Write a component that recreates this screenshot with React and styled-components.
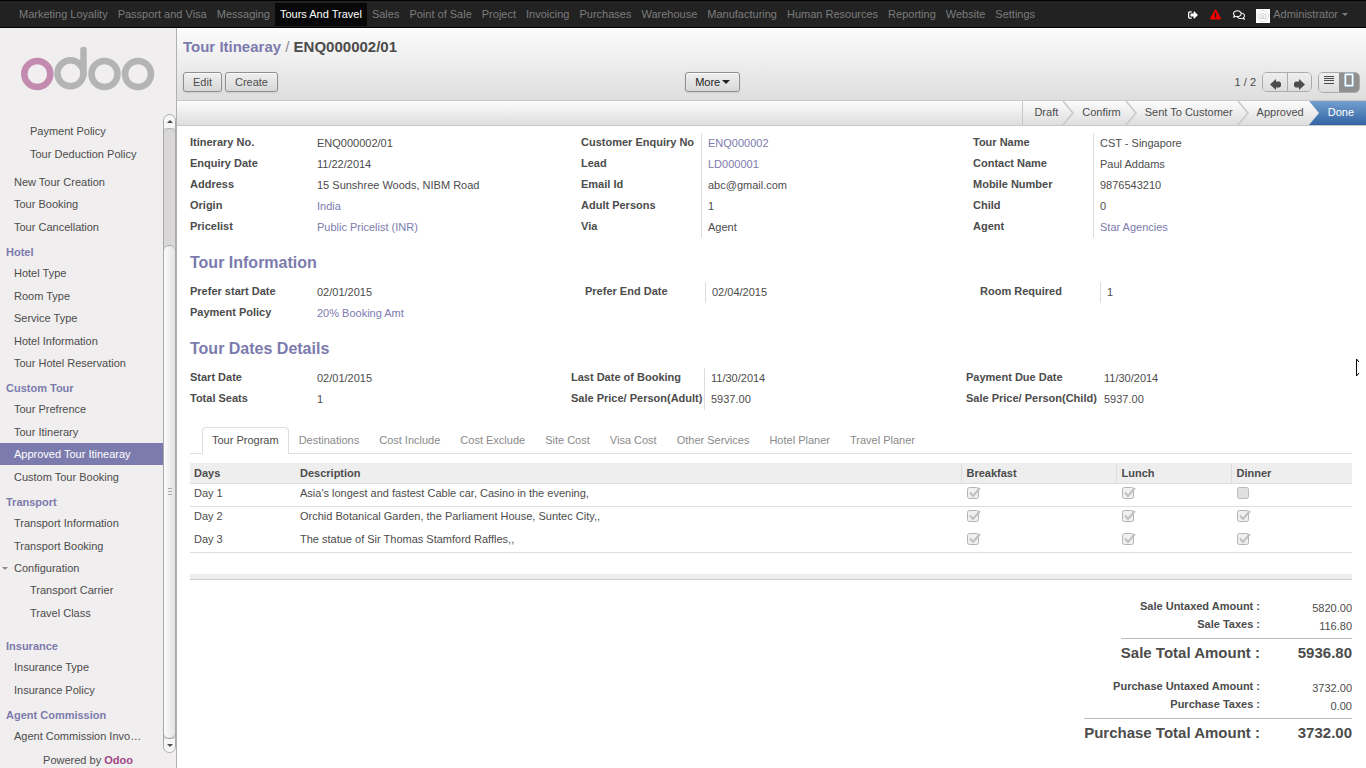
import React from 'react';
import styled, { createGlobalStyle } from 'styled-components';
import { FaSignOutAlt, FaExclamationTriangle, FaRegComments } from 'react-icons/fa';

const GlobalStyle = createGlobalStyle`
  * {
    box-sizing: border-box;
  }

  body {
    margin: 0;
    background: white;
    color: #4c4c4c;
    font-family: "Liberation Sans", Arial, sans-serif;
    font-size: 11px;
    line-height: 21px;
  }

  a {
    color: inherit;
    text-decoration: none;
  }

  ul {
    margin: 0;
    padding: 0;
    list-style: none;
  }

  button {
    font: inherit;
    color: inherit;
  }
`;

const Page = styled.div`
  display: flex;
  flex-direction: column;
  height: 100vh;
  overflow: hidden;
`;

const TopBar = styled.header`
  display: flex;
  justify-content: space-between;
  flex: none;
  height: 28px;
  padding: 2px 18px 1px 14px;
  background: #222;
  border-top: 1px solid #000;
  border-bottom: 1px solid #000;
  color: #7c7c7c;
`;

const NavMenu = styled.nav`
  display: flex;
`;

const NavLink = styled.a`
  padding: 0 5px;
  line-height: 22px;
  white-space: nowrap;
  background: ${props => props.$active ? '#080808' : 'transparent'};
  color: ${props => props.$active ? '#fff' : 'inherit'};
`;

const UserMenu = styled.div`
  display: flex;
  align-items: center;
`;

const IconButton = styled.button`
  display: flex;
  justify-content: center;
  width: 23px;
  padding: 0;
  border: 0;
  background: none;
  color: ${props => props.$color || '#fff'};
`;

const Avatar = styled.span`
  display: flex;
  width: 14px;
  height: 14px;
  margin: 2px 3px 0 6px;
  background: #fff;
`;

const UserName = styled.button`
  display: flex;
  align-items: center;
  gap: 4px;
  padding: 0;
  border: 0;
  background: none;
`;

const Caret = styled.span`
  border: solid transparent;
  border-width: ${props => props.$size || 3}px ${props => props.$size || 3}px 0;
  border-top-color: currentColor;
`;

const Body = styled.div`
  display: flex;
  flex: 1;
  min-height: 0;
`;

const Sidebar = styled.aside`
  display: flex;
  flex-direction: column;
  flex: none;
  width: 177px;
  background: #f0eeee;
  border-right: 1px solid #afafb6;
`;

const LogoLink = styled.a`
  flex: none;
  height: 86px;
  padding: 18px 0 0 21px;
`;

const ScrollArea = styled.div`
  display: flex;
  flex: 1;
  min-height: 0;
`;

const MenuPane = styled.nav`
  flex: 1;
  min-width: 0;
  padding-top: 6px;
  overflow: hidden;
`;

const SectionTitle = styled.h2`
  margin: 0;
  padding: 4px 6px 0;
  font-size: 11px;
  line-height: 20px;
  color: #7c7bad;
`;

const MenuList = styled.ul`
  padding-bottom: ${props => props.$nested ? 5 : 0}px;

  & > li:nth-child(even) {
    margin-top: 1px;
  }

  li:last-child > & {
    padding-bottom: 8px;
  }
`;

const MenuLink = styled.a`
  display: flex;
  align-items: center;
  height: 22px;
  padding-left: ${props => props.$nested ? 30 : props.$open ? 2 : 14}px;
  gap: 6px;
  white-space: nowrap;
  background: ${props => props.$active ? '#7c7bad' : 'transparent'};
  color: ${props => props.$active ? '#fff' : 'inherit'};

  ${Caret} {
    color: #8b8b8b;
  }
`;

const ScrollBar = styled.div`
  display: flex;
  flex-direction: column;
  flex: none;
  width: 13px;
  border: 1px solid #a9a9a9;
  border-radius: 7px;
  background: #d9d7d7;
`;

const ScrollArrow = styled.span`
  display: flex;
  align-items: center;
  justify-content: center;
  height: 13px;
  border-radius: ${props => props.$up ? '6px 6px 0 0' : '0 0 6px 6px'};
  background: #f6f6f6;

  ${Caret} {
    transform: ${props => props.$up ? 'rotate(180deg)' : 'none'};
  }
`;

const ScrollTrack = styled.div`
  display: flex;
  flex-direction: column;
  flex: 1;
  border-top: 1px solid #a9a9a9;
  border-radius: 6px 6px 0 0;
`;

const ScrollThumb = styled.div`
  display: flex;
  flex-direction: column;
  align-items: center;
  justify-content: center;
  gap: 2px;
  height: 81%;
  margin-top: auto;
  border: solid #a0a0a0;
  border-width: 1px 0;
  border-radius: 6px;
  background: linear-gradient(to right, #fcfcfc, #e2e2e2);
`;

const Grip = styled.span`
  width: 4px;
  height: 1px;
  background: #a9a9a9;
`;

const PoweredBy = styled.footer`
  flex: none;
  height: 15px;
  line-height: 15px;
  text-align: center;

  a {
    font-weight: bold;
    color: #a24689;
  }
`;

const Main = styled.main`
  display: flex;
  flex-direction: column;
  flex: 1;
  min-width: 0;
`;

const ControlPanel = styled.div`
  flex: none;
  height: 72px;
  padding: 8px 6px 0;
  background: linear-gradient(#fcfcfc, #dedede);
`;

const Breadcrumb = styled.h1`
  margin: 0 0 14px;
  font-size: 15px;
  line-height: 22px;

  a {
    color: #7c7bad;
  }

  span {
    font-weight: normal;
    color: #8a8a8a;
  }
`;

const Toolbar = styled.div`
  display: grid;
  grid-template-columns: 32fr 43fr;
`;

const ToolGroup = styled.div`
  display: flex;
  align-items: flex-start;
  justify-content: ${props => props.$spread ? 'space-between' : 'flex-start'};
  gap: ${props => props.$gap || 3}px;
`;

const Button = styled.button`
  display: flex;
  align-items: center;
  gap: 2px;
  height: 20px;
  padding: 0 9px;
  border: 1px solid #8f8f8f;
  border-radius: 3px;
  background: linear-gradient(#efefef, #d8d8d8);
  box-shadow: 0 1px 2px rgba(0, 0, 0, 0.1), inset 0 1px 1px rgba(255, 255, 255, 0.8);
  color: ${props => props.$dark ? '#222' : 'inherit'};
`;

const ButtonSet = styled.div`
  display: flex;
  height: ${props => props.$tall ? 21 : 20}px;
  border: 1px solid #ababab;
  border-radius: 5px;
  overflow: hidden;
`;

const SetButton = styled.button`
  display: flex;
  justify-content: center;
  width: ${props => props.$narrow ? 20 : 24}px;
  padding: ${props => props.$narrow ? 0 : 6}px 0 0;
  border: 0;
  border-left: ${props => props.$divided ? '1px solid #ababab' : '0'};
  background: ${props => props.$pressed ? '#8f8f8f' : 'linear-gradient(#efefef, #dcdcdc)'};
`;

const StatusBar = styled.div`
  display: flex;
  justify-content: flex-end;
  flex: none;
  height: 26px;
  border-top: 1px solid #c8c8c8;
  border-bottom: 1px solid #c8c8c8;
  background: linear-gradient(#fcfcfc, #dedede);
`;

const Steps = styled.ul`
  display: flex;
  border-left: 1px solid #c8c8c8;
`;

const Step = styled.li`
  display: flex;
  padding-left: ${props => props.$first ? 11 : 8}px;
  padding-right: ${props => props.$current ? 12 : 0}px;
  gap: 3px;
  line-height: 23px;
  background: ${props => props.$current
    ? 'linear-gradient(#729fcf, #3465a4)'
    : 'linear-gradient(#fcfcfc, #dedede)'};
  color: ${props => props.$current ? '#fff' : 'inherit'};

  svg {
    display: block;
  }
`;

const Sheet = styled.div`
  flex: 1;
  min-height: 0;
  padding: 7px 14px 0 13px;
`;

const FieldRow = styled.div`
  display: grid;
  grid-template-columns: ${props => props.$columns};
  align-items: start;
`;

const FieldGroup = styled.dl`
  display: grid;
  grid-template-columns: ${props => props.$labelWidth}px 1fr;
  margin: 0;
`;

const FieldLabel = styled.dt`
  font-weight: bold;
  line-height: 18px;
  height: 21px;
  white-space: nowrap;
`;

const FieldValue = styled.dd`
  margin: 0;
  padding-left: ${props => props.$ruled ? 6 : 0}px;
  border-left: ${props => props.$ruled ? '1px solid #ddd' : '0'};
  white-space: nowrap;

  a {
    color: #7c7bad;
  }
`;

const SheetTitle = styled.h2`
  margin: 0;
  padding: 15px 0 9px;
  font-size: 16px;
  line-height: 20px;
  color: #7c7bad;
`;

const Tabs = styled.div`
  display: flex;
  height: 27px;
  margin-top: 17px;
  padding-left: 12px;
  border-bottom: 1px solid #ddd;
`;

const Tab = styled.button`
  height: 27px;
  padding: 0 9px 2px;
  border: 1px solid ${props => props.$active ? '#ddd' : 'transparent'};
  border-bottom: 0;
  border-radius: 4px 4px 0 0;
  background: ${props => props.$active ? '#fff' : 'none'};
  color: ${props => props.$active ? '#4c4c4c' : '#8a8a8a'};
  white-space: nowrap;
`;

const ProgramTable = styled.table`
  width: 100%;
  margin-top: 9px;
  border-collapse: collapse;
  table-layout: fixed;
  border-bottom: 1px solid #ddd;

  th {
    height: 20px;
    padding: 0 0 0 5px;
    background: #eee;
    border-left: 1px solid #ddd;
    border-bottom: 1px solid #ddd;
    text-align: left;
    line-height: 20px;
  }

  th:nth-child(-n + 2) {
    padding-left: 4px;
    border-left: 0;
  }

  td {
    height: 23px;
    padding: 0 0 0 6px;
    line-height: 19px;
    vertical-align: top;
  }

  td:nth-child(-n + 2) {
    padding-left: 4px;
  }

  tbody tr:first-child td {
    border-bottom: 1px solid #ddd;
  }
`;

const MealBox = styled.input`
  appearance: none;
  display: block;
  width: 14px;
  height: 12px;
  margin: 3px 0 0;
  background: url("data:image/svg+xml,%3Csvg xmlns='http://www.w3.org/2000/svg' width='14' height='12'%3E%3Crect x='.5' y='.5' width='11' height='11' rx='2' fill='%23e0e0e0' stroke='%23bbb'/%3E%3C/svg%3E");

  &:checked {
    background: url("data:image/svg+xml,%3Csvg xmlns='http://www.w3.org/2000/svg' width='14' height='12'%3E%3Crect x='.5' y='.5' width='11' height='11' rx='2' fill='%23f0f0f0' stroke='%23b4b4b4'/%3E%3Cpath d='M3 5.5l3 3.5 7-8' fill='none' stroke='%23c0c0c0' stroke-width='2'/%3E%3C/svg%3E");
  }
`;

const TableFooter = styled.div`
  height: 6px;
  margin-top: 21px;
  background: #eee;
  border-bottom: 1px solid #ccc;
`;

const Totals = styled.div`
  display: flex;
  flex-direction: column;
  align-items: flex-end;
  gap: 13px;
  padding-top: 17px;
`;

const TotalGroup = styled.dl`
  display: grid;
  grid-template-columns: auto 92px;
  margin: 0;
  text-align: right;
  line-height: 18px;
`;

const TotalLabel = styled.dt`
  font-weight: bold;
`;

const TotalValue = styled.dd`
  margin: 0;
  padding-top: 2px;
  height: 18px;
`;

const GrandTotal = styled.div`
  display: grid;
  grid-template-columns: subgrid;
  grid-column: 1 / -1;
  margin-top: 5px;
  padding-top: 3px;
  border-top: 1px solid #bbb;
  font-size: 15px;
  font-weight: bold;
  line-height: 22px;

  dd {
    margin: 0;
  }
`;

const Pointer = styled.svg`
  position: absolute;
  top: 358px;
  right: 7px;
`;

const NAV_ITEMS = [
  'Marketing Loyality', 'Passport and Visa', 'Messaging', 'Tours And Travel', 'Sales',
  'Point of Sale', 'Project', 'Invoicing', 'Purchases', 'Warehouse', 'Manufacturing',
  'Human Resources', 'Reporting', 'Website', 'Settings',
];

const MENU = [
  {
    items: [
      { children: ['Payment Policy', 'Tour Deduction Policy'] },
      { name: 'New Tour Creation' },
      { name: 'Tour Booking' },
      { name: 'Tour Cancellation' },
    ],
  },
  {
    title: 'Hotel',
    items: [
      { name: 'Hotel Type' },
      { name: 'Room Type' },
      { name: 'Service Type' },
      { name: 'Hotel Information' },
      { name: 'Tour Hotel Reservation' },
    ],
  },
  {
    title: 'Custom Tour',
    items: [
      { name: 'Tour Prefrence' },
      { name: 'Tour Itinerary' },
      { name: 'Approved Tour Itinearay', active: true },
      { name: 'Custom Tour Booking' },
    ],
  },
  {
    title: 'Transport',
    items: [
      { name: 'Transport Information' },
      { name: 'Transport Booking' },
      { name: 'Configuration', children: ['Transport Carrier', 'Travel Class'] },
    ],
  },
  { title: 'Insurance', items: [{ name: 'Insurance Type' }, { name: 'Insurance Policy' }] },
  { title: 'Agent Commission', items: [{ name: 'Agent Commission Invo…' }] },
];

const STEPS = ['Draft', 'Confirm', 'Sent To Customer', 'Approved', 'Done'];

const CUSTOMER_GROUPS = [
  {
    labelWidth: 127,
    fields: [
      ['Itinerary No.', 'ENQ000002/01'],
      ['Enquiry Date', '11/22/2014'],
      ['Address', '15 Sunshree Woods, NIBM Road'],
      ['Origin', 'India', true],
      ['Pricelist', 'Public Pricelist (INR)', true],
    ],
  },
  {
    labelWidth: 120,
    ruled: true,
    fields: [
      ['Customer Enquiry No', 'ENQ000002', true],
      ['Lead', 'LD000001', true],
      ['Email Id', 'abc@gmail.com'],
      ['Adult Persons', '1'],
      ['Via', 'Agent'],
    ],
  },
  {
    labelWidth: 120,
    ruled: true,
    fields: [
      ['Tour Name', 'CST - Singapore'],
      ['Contact Name', 'Paul Addams'],
      ['Mobile Number', '9876543210'],
      ['Child', '0'],
      ['Agent', 'Star Agencies', true],
    ],
  },
];

const INFO_GROUPS = [
  {
    labelWidth: 127,
    fields: [
      ['Prefer start Date', '02/01/2015'],
      ['Payment Policy', '20% Booking Amt', true],
    ],
  },
  { labelWidth: 120, ruled: true, fields: [['Prefer End Date', '02/04/2015']] },
  { labelWidth: 120, ruled: true, fields: [['Room Required', '1']] },
];

const DATE_GROUPS = [
  { labelWidth: 127, fields: [['Start Date', '02/01/2015'], ['Total Seats', '1']] },
  {
    labelWidth: 133,
    ruled: true,
    fields: [['Last Date of Booking', '11/30/2014'], ['Sale Price/ Person(Adult)', '5937.00']],
  },
  {
    labelWidth: 138,
    fields: [['Payment Due Date', '11/30/2014'], ['Sale Price/ Person(Child)', '5937.00']],
  },
];

const TABS = [
  'Tour Program', 'Destinations', 'Cost Include', 'Cost Exclude', 'Site Cost',
  'Visa Cost', 'Other Services', 'Hotel Planer', 'Travel Planer',
];

const MEALS = ['Breakfast', 'Lunch', 'Dinner'];

const DAYS = [
  { day: 'Day 1', text: "Asia's longest and fastest Cable car, Casino in the evening,", meals: [true, true, false] },
  { day: 'Day 2', text: 'Orchid Botanical Garden, the Parliament House, Suntec City,,', meals: [true, true, true] },
  { day: 'Day 3', text: 'The statue of Sir Thomas Stamford Raffles,,', meals: [true, true, true] },
];

const TOTALS = [
  {
    rows: [['Sale Untaxed Amount :', '5820.00'], ['Sale Taxes :', '116.80']],
    total: ['Sale Total Amount :', '5936.80'],
  },
  {
    rows: [['Purchase Untaxed Amount :', '3732.00'], ['Purchase Taxes :', '0.00']],
    total: ['Purchase Total Amount :', '3732.00'],
  },
];

function Logo() {
  return (
    <svg width="134" height="46" viewBox="0 0 134 46" fill="none" strokeWidth="6.5">
      <circle cx="16.3" cy="28" r="13" stroke="#c48bb1" />
      <g stroke="#b4b4b4">
        <circle cx="49.5" cy="27.3" r="13" />
        <path d="M62.5 28V4" strokeLinecap="round" />
        <circle cx="83.5" cy="28" r="13" />
        <circle cx="117" cy="28" r="13" />
      </g>
    </svg>
  );
}

function Chevron({ last }) {
  return (
    <svg width="13" height="24" viewBox="0 0 13 24">
      <defs>
        <linearGradient id="stepFill" x1="0" y1="0" x2="0" y2="1">
          <stop offset="0" stopColor="#fcfcfc" />
          <stop offset="1" stopColor="#dedede" />
        </linearGradient>
        <linearGradient id="stepDone" x1="0" y1="0" x2="0" y2="1">
          <stop offset="0" stopColor="#729fcf" />
          <stop offset="1" stopColor="#3465a4" />
        </linearGradient>
      </defs>
      {last && <rect width="13" height="24" fill="url(#stepDone)" />}
      <path d="M0 0H2L12 12L2 24H0Z" fill="url(#stepFill)" />
      {!last && <path d="M2 0L12 12L2 24" fill="none" stroke="#c8c8c8" strokeWidth="1.5" />}
    </svg>
  );
}

function MenuItem({ item }) {
  return (
    <li>
      {item.name && (
        <MenuLink href="#" $active={item.active} $open={Boolean(item.children)}>
          {item.children && <Caret />}
          {item.name}
        </MenuLink>
      )}
      {item.children && (
        <MenuList $nested>
          {item.children.map(child => (
            <li key={child}>
              <MenuLink href="#" $nested>{child}</MenuLink>
            </li>
          ))}
        </MenuList>
      )}
    </li>
  );
}

function Fields({ groups, columns }) {
  return (
    <FieldRow $columns={columns}>
      {groups.map((group, index) => (
        <FieldGroup key={index} $labelWidth={group.labelWidth}>
          {group.fields.map(([label, value, isLink]) => (
            <React.Fragment key={label}>
              <FieldLabel>{label}</FieldLabel>
              <FieldValue $ruled={group.ruled}>
                {isLink ? <a href="#">{value}</a> : value}
              </FieldValue>
            </React.Fragment>
          ))}
        </FieldGroup>
      ))}
    </FieldRow>
  );
}

function App() {
  return (
    <Page>
      <GlobalStyle />
      <TopBar>
        <NavMenu>
          {NAV_ITEMS.map(item => (
            <NavLink key={item} href="#" $active={item === 'Tours And Travel'}>{item}</NavLink>
          ))}
        </NavMenu>
        <UserMenu>
          <IconButton aria-label="Sign out"><FaSignOutAlt size={10} /></IconButton>
          <IconButton aria-label="Warnings" $color="#f00000"><FaExclamationTriangle size={11} /></IconButton>
          <IconButton aria-label="Messages"><FaRegComments size={12} /></IconButton>
          <Avatar>
            <svg width="14" height="14" viewBox="0 0 14 14" fill="none" stroke="#cfcfcf">
              <circle cx="7" cy="7" r="5.5" stroke="#e2e2e2" />
              <path d="M4 5.5H5.5L6 4.5H8L8.5 5.5H10V9.5H4Z" />
              <circle cx="7" cy="7.5" r="1" />
            </svg>
          </Avatar>
          <UserName>Administrator <Caret /></UserName>
        </UserMenu>
      </TopBar>

      <Body>
        <Sidebar>
          <LogoLink href="#" aria-label="Home"><Logo /></LogoLink>
          <ScrollArea>
            <MenuPane>
              {MENU.map((section, index) => (
                <React.Fragment key={index}>
                  {section.title && <SectionTitle>{section.title}</SectionTitle>}
                  <MenuList>
                    {section.items.map((item, i) => <MenuItem key={i} item={item} />)}
                  </MenuList>
                </React.Fragment>
              ))}
            </MenuPane>
            <ScrollBar>
              <ScrollArrow $up><Caret /></ScrollArrow>
              <ScrollTrack>
                <ScrollThumb><Grip /><Grip /><Grip /></ScrollThumb>
              </ScrollTrack>
              <ScrollArrow><Caret /></ScrollArrow>
            </ScrollBar>
          </ScrollArea>
          <PoweredBy>Powered by <a href="#">Odoo</a></PoweredBy>
        </Sidebar>

        <Main>
          <ControlPanel>
            <Breadcrumb><a href="#">Tour Itinearay</a> <span>/</span> ENQ000002/01</Breadcrumb>
            <Toolbar>
              <ToolGroup>
                <Button>Edit</Button>
                <Button>Create</Button>
              </ToolGroup>
              <ToolGroup $spread>
                <Button $dark>More <Caret $size={4} /></Button>
                <ToolGroup $gap={6}>
                  <span>1 / 2</span>
                  <ButtonSet>
                    <SetButton aria-label="Previous">
                      <svg width="11" height="11" viewBox="0 0 11 11" fill="#4c4c4c">
                        <path d="M0 5.5L6 0V2.5H9.5L11 4V7L9.5 8.5H6V11Z" />
                      </svg>
                    </SetButton>
                    <SetButton aria-label="Next" $divided>
                      <svg width="11" height="11" viewBox="0 0 11 11" fill="#4c4c4c">
                        <path d="M11 5.5L5 0V2.5H1.5L0 4V7L1.5 8.5H5V11Z" />
                      </svg>
                    </SetButton>
                  </ButtonSet>
                  <ButtonSet $tall>
                    <SetButton aria-label="List" $narrow>
                      <svg width="10" height="12" viewBox="0 0 10 12" stroke="#4c4c4c">
                        <path d="M0 3.5H10M0 5.5H10M0 7.5H10M0 10.5H10" />
                      </svg>
                    </SetButton>
                    <SetButton aria-label="Form" $narrow $pressed>
                      <svg width="10" height="14" viewBox="0 0 10 14" fill="none">
                        <rect x="0.5" y="0.5" width="9" height="13" rx="1" stroke="#8cc0e8" />
                        <rect x="1.5" y="1.5" width="7" height="11" stroke="#fff" strokeWidth="1.5" />
                      </svg>
                    </SetButton>
                  </ButtonSet>
                </ToolGroup>
              </ToolGroup>
            </Toolbar>
          </ControlPanel>

          <StatusBar>
            <Steps>
              {STEPS.map((step, index) => (
                <Step key={step} $first={index === 0} $current={step === 'Done'}>
                  {step}
                  {index < 4 && <Chevron last={index === 3} />}
                </Step>
              ))}
            </Steps>
          </StatusBar>

          <Sheet>
            <Fields groups={CUSTOMER_GROUPS} columns="391fr 392fr 379fr" />
            <SheetTitle>Tour Information</SheetTitle>
            <Fields groups={INFO_GROUPS} columns="395fr 395fr 372fr" />
            <SheetTitle>Tour Dates Details</SheetTitle>
            <Fields groups={DATE_GROUPS} columns="381fr 395fr 386fr" />

            <Tabs role="tablist">
              {TABS.map(tab => (
                <Tab key={tab} role="tab" $active={tab === 'Tour Program'}>{tab}</Tab>
              ))}
            </Tabs>

            <ProgramTable>
              <colgroup>
                <col width="106" />
                <col />
                <col width="155" />
                <col width="115" />
                <col width="121" />
              </colgroup>
              <thead>
                <tr>
                  <th>Days</th>
                  <th>Description</th>
                  {MEALS.map(meal => <th key={meal}>{meal}</th>)}
                </tr>
              </thead>
              <tbody>
                {DAYS.map(row => (
                  <tr key={row.day}>
                    <td>{row.day}</td>
                    <td>{row.text}</td>
                    {row.meals.map((served, i) => (
                      <td key={MEALS[i]}>
                        <MealBox
                          type="checkbox"
                          aria-label={`${row.day} ${MEALS[i]}`}
                          defaultChecked={served}
                          disabled
                        />
                      </td>
                    ))}
                  </tr>
                ))}
              </tbody>
            </ProgramTable>
            <TableFooter />

            <Totals>
              {TOTALS.map(group => (
                <TotalGroup key={group.total[0]}>
                  {group.rows.map(([label, value]) => (
                    <React.Fragment key={label}>
                      <TotalLabel>{label}</TotalLabel>
                      <TotalValue>{value}</TotalValue>
                    </React.Fragment>
                  ))}
                  <GrandTotal>
                    <dt>{group.total[0]}</dt>
                    <dd>{group.total[1]}</dd>
                  </GrandTotal>
                </TotalGroup>
              ))}
            </Totals>
          </Sheet>
        </Main>
      </Body>

      <Pointer width="3" height="19" viewBox="0 0 3 19" fill="#fff" stroke="#000">
        <path d="M3 4L0.5 1V18L3 15" />
      </Pointer>
    </Page>
  );
}

export default App;
